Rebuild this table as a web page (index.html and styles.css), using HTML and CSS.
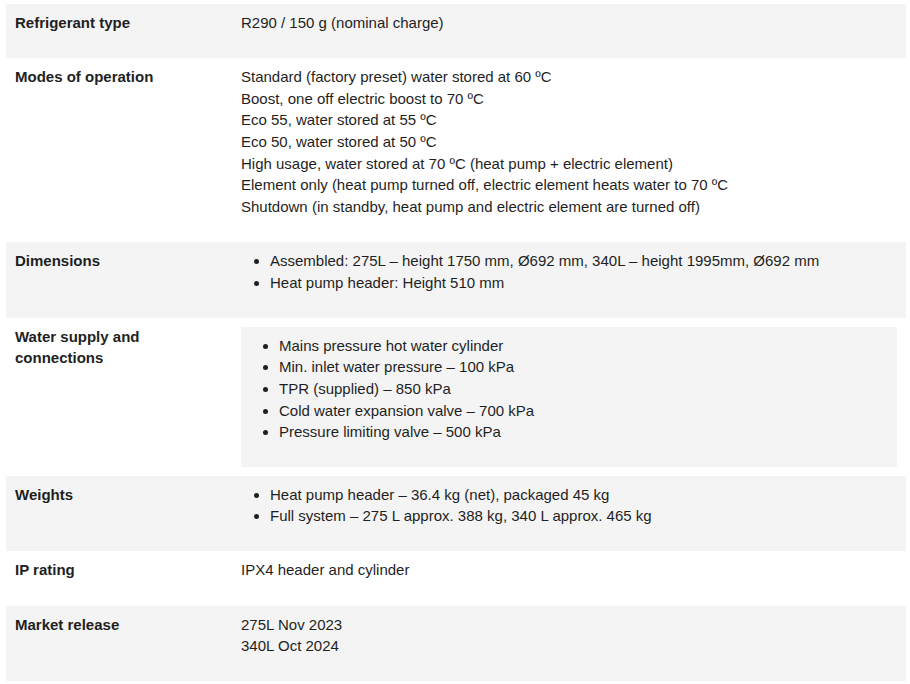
FILE: index.html
```html
<!DOCTYPE html>
<html lang="en">
<head>
<meta charset="utf-8">
<title>Specifications</title>
<link rel="stylesheet" href="styles.css">
</head>
<body>
<div class="page">
  <div class="spec-table">
    <div class="row shaded">
      <div class="label">Refrigerant type</div>
      <div class="value"><p>R290 / 150 g (nominal charge)</p></div>
    </div>
    <div class="row">
      <div class="label">Modes of operation</div>
      <div class="value"><p>Standard (factory preset) water stored at 60 ºC<br>Boost, one off electric boost to 70 ºC<br>Eco 55, water stored at 55 ºC<br>Eco 50, water stored at 50 ºC<br>High usage, water stored at 70 ºC (heat pump + electric element)<br>Element only (heat pump turned off, electric element heats water to 70 ºC<br>Shutdown (in standby, heat pump and electric element are turned off)</p></div>
    </div>
    <div class="row shaded">
      <div class="label">Dimensions</div>
      <div class="value">
        <ul>
          <li>Assembled: 275L – height 1750 mm, Ø692 mm, 340L – height 1995mm, Ø692 mm</li>
          <li>Heat pump header: Height 510 mm</li>
        </ul>
      </div>
    </div>
    <div class="row">
      <div class="label">Water supply and connections</div>
      <div class="value">
        <div class="inner-box">
          <ul>
            <li>Mains pressure hot water cylinder</li>
            <li>Min. inlet water pressure – 100 kPa</li>
            <li>TPR (supplied) – 850 kPa</li>
            <li>Cold water expansion valve – 700 kPa</li>
            <li>Pressure limiting valve – 500 kPa</li>
          </ul>
        </div>
      </div>
    </div>
    <div class="row shaded">
      <div class="label">Weights</div>
      <div class="value">
        <ul>
          <li>Heat pump header – 36.4 kg (net), packaged 45 kg</li>
          <li>Full system – 275 L approx. 388 kg, 340 L approx. 465 kg</li>
        </ul>
      </div>
    </div>
    <div class="row">
      <div class="label">IP rating</div>
      <div class="value"><p>IPX4 header and cylinder</p></div>
    </div>
    <div class="row shaded">
      <div class="label">Market release</div>
      <div class="value"><p>275L Nov 2023<br>340L Oct 2024</p></div>
    </div>
  </div>
</div>
</body>
</html>
```

FILE: styles.css
```css
html, body {
  margin: 0;
  padding: 0;
  background: #ffffff;
}

body {
  font-family: "Liberation Sans", Arial, sans-serif;
  font-size: 15px;
  line-height: 21.6px;
  color: #1f1f1f;
}

.page {
  padding: 4px 4px 0 6px;
}

.spec-table {
  width: 900px;
  display: flex;
  flex-direction: column;
}

.row {
  display: grid;
  grid-template-columns: 226px 1fr;
}

.row.shaded {
  background: #f4f4f4;
}

.label {
  padding: 8px 9px 10px 9px;
  font-weight: bold;
}

.value {
  padding: 8px 9px 10px 9px;
}

.value p {
  margin: 0 0 14.6px 0;
}

.value ul {
  margin: 0 0 14.6px 0;
  padding-left: 29px;
}

.inner-box {
  background: #f4f4f4;
  margin: 1px 0 -1px 0;
  padding: 8px 9px 9px 9px;
}

.inner-box ul {
  margin: 0 0 15px 0;
}
```
